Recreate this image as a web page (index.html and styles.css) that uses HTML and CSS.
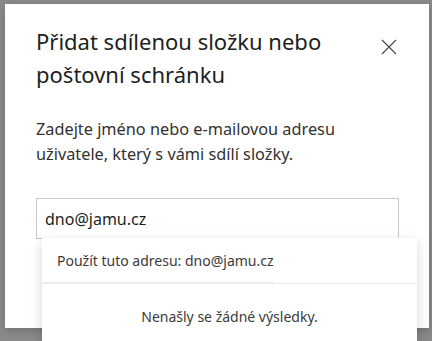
FILE: index.html
```html
<!DOCTYPE html>
<html lang="cs">
<head>
    <meta charset="UTF-8">
    <meta name="viewport" content="width=device-width, initial-scale=1.0">
    <title>Přidat sdílenou složku</title>
    <link rel="stylesheet" href="styles.css">
</head>
<body>
    <div class="backdrop">
        <div class="dialog">
            <div class="dialog-header">
                <h1 class="dialog-title">Přidat sdílenou složku nebo poštovní schránku</h1>
                <button class="close" aria-label="Zavřít">
                    <svg width="16" height="16" viewBox="0 0 16 16">
                        <path d="M1 1 L15 15 M15 1 L1 15" stroke="#444" stroke-width="1.1" fill="none"/>
                    </svg>
                </button>
            </div>
            <p class="dialog-text">Zadejte jméno nebo e-mailovou adresu uživatele, který s vámi sdílí složky.</p>
            <div class="picker">
                <input class="picker-input" type="text" value="dno@jamu.cz">
                <div class="suggestions">
                    <div class="suggestion-row">
                        <span class="suggestion">Použít tuto adresu: dno@jamu.cz</span>
                    </div>
                    <div class="no-results">Nenašly se žádné výsledky.</div>
                </div>
            </div>
        </div>
    </div>
</body>
</html>
```

FILE: styles.css
```css
body {
    margin: 0;
    background: #8a8a8a;
    font-family: "Segoe UI", "Noto Sans", sans-serif;
    overflow: hidden;
}

.backdrop {
    height: 341px;
    padding: 4px 3px 0 5px;
    box-sizing: border-box;
}

.dialog {
    width: 424px;
    height: 324px;
    background: #fff;
    box-sizing: border-box;
    padding: 21px 30px 0 31px;
    box-shadow: 0 2px 8px rgba(0,0,0,0.2);
}

.dialog-header {
    display: flex;
    justify-content: space-between;
    align-items: flex-start;
}

.dialog-title {
    margin: 0;
    width: 320px;
    font-size: 22px;
    font-weight: 400;
    line-height: 33px;
    color: #201f1e;
}

.close {
    border: 0;
    background: none;
    padding: 0;
    margin: 14px 2px 0 0;
    width: 16px;
    height: 16px;
}

.dialog-text {
    margin: 26px 0 0;
    font-size: 16.3px;
    line-height: 25px;
    color: #323130;
}

.picker {
    position: relative;
    margin-top: 31px;
}

.picker-input {
    display: block;
    width: 100%;
    height: 41px;
    box-sizing: border-box;
    border: 1px solid #c8c8c8;
    padding: 0 8px;
    font-family: inherit;
    font-size: 16px;
    color: #201f1e;
    outline: none;
}

.suggestions {
    position: absolute;
    top: 40px;
    left: 6px;
    width: 375px;
    height: 120px;
    background: #fff;
    box-shadow: 0 4px 12px rgba(0,0,0,0.16);
}

.suggestion-row {
    height: 45px;
    border-bottom: 1px solid #ebebeb;
    display: flex;
    align-items: stretch;
}

.suggestion {
    display: flex;
    align-items: center;
    padding: 0 0 0 15px;
    font-size: 14px;
    color: #3b3a39;
    border-bottom: 1px solid #ebebeb;
}

.no-results {
    text-align: center;
    padding-top: 23px;
    font-size: 14px;
    color: #3b3a39;
}
```
